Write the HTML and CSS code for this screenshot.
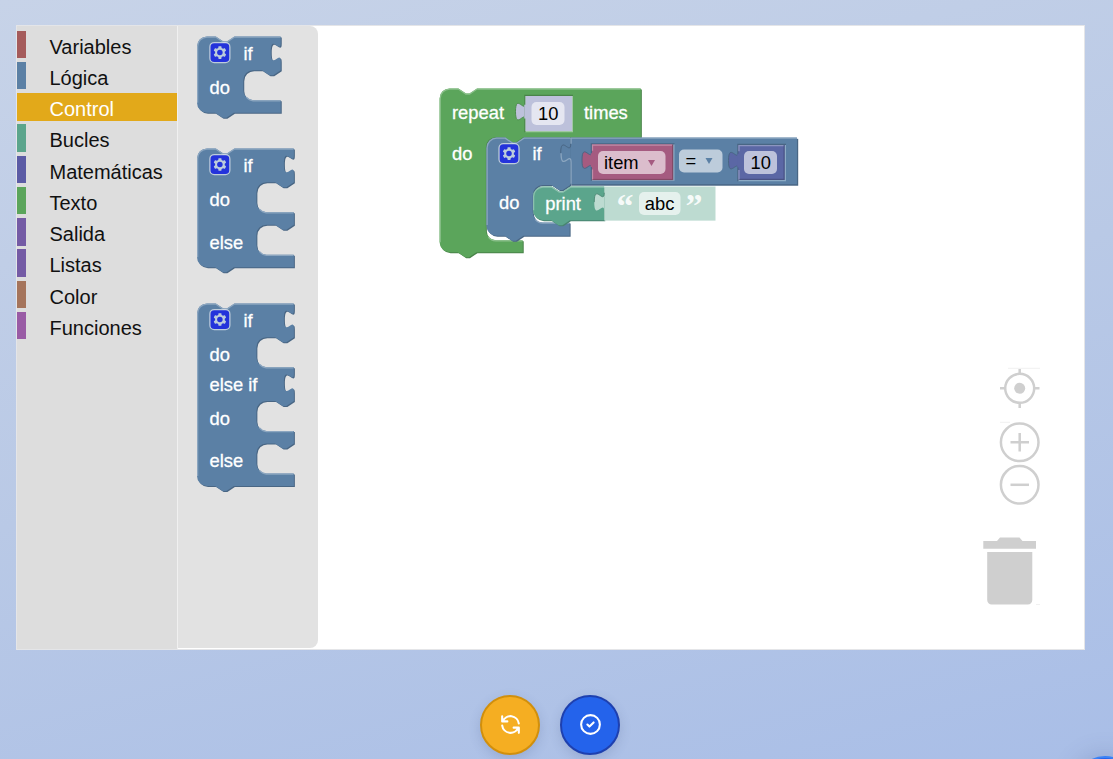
FILE: index.html
```html
<!DOCTYPE html>
<html lang="es">
<head>
<meta charset="utf-8">
<title>Editor de bloques</title>
<link rel="stylesheet" href="styles.css">
</head>
<body>
<main class="page">
  <section class="editor">
    <ul class="toolbox">
      <li class="category variables">Variables</li>
      <li class="category logic">Lógica</li>
      <li class="category control selected">Control</li>
      <li class="category loops">Bucles</li>
      <li class="category math">Matemáticas</li>
      <li class="category text">Texto</li>
      <li class="category output">Salida</li>
      <li class="category lists">Listas</li>
      <li class="category color">Color</li>
      <li class="category functions">Funciones</li>
    </ul>
    <div class="flyout">
      <svg class="canvas" viewBox="178 26 140 623" width="140" height="623">
        <defs>
          <g id="gear" opacity=".6">
            <rect width="16" height="16" rx="3.500" fill="#00f" stroke="#fff"/>
            <path fill="#fff" d="m4.203,7.296 0,1.368 -0.92,0.677 -0.11,0.41 0.9,1.559 0.41,0.11 1.043,-0.457 1.187,0.683 0.127,1.134 0.3,0.3 1.8,0 0.3,-0.299 0.127,-1.138 1.185,-0.682 1.046,0.458 0.409,-0.11 0.9,-1.559 -0.11,-0.41 -0.92,-0.677 0,-1.366 0.92,-0.677 0.11,-0.41 -0.9,-1.559 -0.409,-0.109 -1.046,0.458 -1.185,-0.682 -0.127,-1.138 -0.3,-0.299 -1.8,0 -0.3,0.3 -0.126,1.135 -1.187,0.682 -1.043,-0.457 -0.41,0.11 -0.899,1.559 0.108,0.409z"/>
            <circle cx="8" cy="8" r="2.2" fill="#00f"/>
          </g>
          <path id="if1" d="M0,8 A8,8 0 0,1 8,0 H15 l6,4 3,0 6,-4 H67 v5 c0,10 -8,-8 -8,7.5 s8,-2.5 8,7.5 V27 l-6,4 -3,0 -6,-4 h-7 a8,8 0 0,0 -8,8 v8 a8,8 0 0,0 8,8 H67 V61 H29.5 l-6,4 -3,0 -6,-4 H8 a8,8 0 0,1 -8,-8 z"/>
          <path id="if2" d="M0,8 A8,8 0 0,1 8,0 H15 l6,4 3,0 6,-4 H77.500 v5 c0,10 -8,-8 -8,7.500 s8,-2.500 8,7.500 V27 l-6,4 -3,0 -6,-4 h-7 a8,8 0 0,0 -8,8 v8 a8,8 0 0,0 8,8 H77.500 V61 l-6,4 -3,0 -6,-4 h-7 a8,8 0 0,0 -8,8 v8 a8,8 0 0,0 8,8 H77.500 V95 H29.500 l-6,4 -3,0 -6,-4 H8 a8,8 0 0,1 -8,-8 z"/>
          <path id="if3" d="M0,8 A8,8 0 0,1 8,0 H15 l6,4 3,0 6,-4 H77.500 v5 c0,10 -8,-8 -8,7.500 s8,-2.500 8,7.500 V27 l-6,4 -3,0 -6,-4 h-7 a8,8 0 0,0 -8,8 v8 a8,8 0 0,0 8,8 H77.500 v5 c0,10 -8,-8 -8,7.500 s8,-2.500 8,7.500 V78 l-6,4 -3,0 -6,-4 h-7 a8,8 0 0,0 -8,8 v8 a8,8 0 0,0 8,8 H77.500 V112 l-6,4 -3,0 -6,-4 h-7 a8,8 0 0,0 -8,8 v8 a8,8 0 0,0 8,8 H77.500 V146 H29.500 l-6,4 -3,0 -6,-4 H8 a8,8 0 0,1 -8,-8 z"/>
        </defs>
        <g class="block" transform="translate(197 36.400) scale(1.25)">
          <use href="#if1" x=".8" y=".8" fill="#496684"/>
          <use href="#if1" fill="#5b80a5"/>
          <path class="light blue-light" d="M.5,53 V8 A7.500,7.500 0 0,1 8,.5 H15 l6,4 3,0 6,-4 H66.500 M39.500,48.500 a8,8 0 0,0 5.500,3 H66.500"/>
          <use href="#gear" x="10.300" y="4.900"/>
        </g>
        <g class="block" transform="translate(197 148.400) scale(1.25)">
          <use href="#if2" x=".8" y=".8" fill="#496684"/>
          <use href="#if2" fill="#5b80a5"/>
          <path class="light blue-light" d="M.5,87 V8 A7.500,7.500 0 0,1 8,.5 H15 l6,4 3,0 6,-4 H77 M50,48.500 a8,8 0 0,0 5.500,3 H77 M50,82.500 a8,8 0 0,0 5.500,3 H77"/>
          <use href="#gear" x="10.300" y="4.900"/>
        </g>
        <g class="block" transform="translate(197 303.400) scale(1.25)">
          <use href="#if3" x=".8" y=".8" fill="#496684"/>
          <use href="#if3" fill="#5b80a5"/>
          <path class="light blue-light" d="M.5,138 V8 A7.500,7.500 0 0,1 8,.5 H15 l6,4 3,0 6,-4 H77 M50,48.500 a8,8 0 0,0 5.500,3 H77 M50,99.500 a8,8 0 0,0 5.500,3 H77 M50,133.500 a8,8 0 0,0 5.500,3 H77"/>
          <use href="#gear" x="10.300" y="4.900"/>
        </g>
        <g class="label">
          <text x="243.500" y="60">if</text>
          <text x="209.500" y="94">do</text>
          <text x="243.500" y="172">if</text>
          <text x="209.500" y="206">do</text>
          <text x="209.500" y="249">else</text>
          <text x="243.500" y="327">if</text>
          <text x="209.500" y="361">do</text>
          <text x="209.500" y="391">else if</text>
          <text x="209.500" y="425">do</text>
          <text x="209.500" y="467">else</text>
        </g>
      </svg>
    </div>
    <div class="workspace">
      <svg class="canvas" viewBox="318 26 766 623" width="766" height="623">
        <defs>
          <path id="repeat" d="M0,8 A8,8 0 0,1 8,0 H15 l6,4 3,0 6,-4 H161 V39 H67 l-6,4 -3,0 -6,-4 h-7 a8,8 0 0,0 -8,8 V113.500 a8,8 0 0,0 8,8 H66.500 V131 H29.500 l-6,4 -3,0 -6,-4 H8 a8,8 0 0,1 -8,-8 z"/>
          <path id="cond" d="M0,8 A8,8 0 0,1 8,0 H15 l6,4 3,0 6,-4 H67 V38 l-6,4 -3,0 -6,-4 h-7 a8,8 0 0,0 -8,8 V60 a8,8 0 0,0 8,8 H66.500 V78.500 H29.500 l-6,4 -3,0 -6,-4 H8 a8,8 0 0,1 -8,-8 z"/>
          <path id="print" d="M0,8 A8,8 0 0,1 8,0 H15 l6,4 3,0 6,-4 H57 V27 H29.500 l-6,4 -3,0 -6,-4 H8 a8,8 0 0,1 -8,-8 z"/>
          <path id="tab" d="M0,20 c0,-10 -8,8 -8,-7.500 s8,2.500 8,-7.500 z"/>
        </defs>
        <!-- repeat -->
        <g transform="translate(439.600 88.400) scale(1.25)">
          <use href="#repeat" x=".8" y=".8" fill="#498449"/>
          <use href="#repeat" fill="#5ba55b"/>
          <path class="light green-light" d="M.5,123 V8 A7.500,7.500 0 0,1 8,.5 H15 l6,4 3,0 6,-4 H160.500 M39,119 a8,8 0 0,0 6,3 H66"/>
        </g>
        <!-- shadow number -->
        <g transform="translate(525.500 96) scale(1.25)">
          <use href="#tab" fill="#bdc1db" stroke="#4c8c4c" stroke-width=".8"/>
          <rect x="-.5" y="-.5" width="38.500" height="29.500" fill="#9ec99e"/>
          <path d="M-.5,29 V-.5 H38" fill="none" stroke="#498449"/>
          <rect width="37.300" height="28" fill="#bdc1db"/>
          <rect x="-1" y="7" width="3" height="11" fill="#bdc1db"/>
        </g>
        <!-- if -->
        <g transform="translate(486.500 137.600) scale(1.25)">
          <use href="#cond" x=".8" y=".8" fill="#496684"/>
          <use href="#cond" fill="#5b80a5"/>
          <path class="light blue-light" d="M.5,70 V8 A7.500,7.500 0 0,1 8,.5 H15 l6,4 3,0 6,-4 H67 M39,65.500 a8,8 0 0,0 6,3 H66"/>
          <use href="#gear" x="10" y="4.800"/>
        </g>
        <!-- comparison -->
        <g transform="translate(570.700 137.600) scale(1.25)">
          <rect x=".5" y="1" width="181.500" height="37.500" fill="#496684"/>
          <rect width="181" height="37.300" fill="#5b80a5"/>
          <use href="#tab" fill="#5b80a5"/>
          <path d="M0,5 c0,10 -8,-8 -8,7.500" fill="none" stroke="#496684" stroke-width=".8"/>
          <path class="light blue-light" d="M.3,37 V20 c0,-10 -8,8 -8,-7.500 M.3,5 V.5 H181"/>
        </g>
        <!-- item -->
        <g transform="translate(592 144.500) scale(1.25)">
          <path d="M-.5,29 V-.5 H66 V29 z" fill="#8cabc5"/>
          <path d="M-.5,29 V-.5 H66" fill="none" stroke="#496684"/>
          <use href="#tab" fill="#a55b80" stroke="#496684" stroke-width=".8"/>
          <rect width="65" height="28.500" fill="#844966"/>
          <rect width="64" height="27.500" fill="#a55b80"/>
          <rect x="-1" y="7" width="3" height="11" fill="#a55b80"/>
          <path class="light pink-light" d="M.4,28 V20 M.4,5 V.4 H64"/>
        </g>
        <!-- number -->
        <g transform="translate(738.500 145) scale(1.25)">
          <path d="M-.5,29 V-.5 H38 V29 z" fill="#8cabc5"/>
          <path d="M-.5,29 V-.5 H38" fill="none" stroke="#496684"/>
          <use href="#tab" fill="#5b67a5" stroke="#496684" stroke-width=".8"/>
          <rect width="37" height="28" fill="#495284"/>
          <rect width="36" height="27" fill="#5b67a5"/>
          <rect x="-1" y="7" width="3" height="11" fill="#5b67a5"/>
          <path class="light violet-light" d="M.4,27.500 V20 M.4,5 V.4 H36"/>
        </g>
        <!-- print and its text -->
        <g transform="translate(533 186.500) scale(1.25)">
          <use href="#print" x=".8" y=".8" fill="#498470"/>
          <use href="#print" fill="#5ba58c"/>
          <path class="light mint-light" d="M.5,19 V8 A7.500,7.500 0 0,1 8,.5 H15 l6,4 3,0 6,-4 H57"/>
          <rect x="57" width="89" height="27.300" fill="#bddbd1"/>
          <use href="#tab" x="57" fill="#bddbd1"/>
          <path d="M57,5 c0,10 -8,-8 -8,7.500" fill="none" stroke="#498470" stroke-width=".7"/>
        </g>
        <!-- fields -->
        <g class="fields">
          <rect x="531.500" y="102" width="33" height="23" rx="5"/>
          <rect x="598" y="151" width="67.500" height="23" rx="5"/>
          <rect x="679" y="149.500" width="43.500" height="23" rx="5"/>
          <rect x="744" y="151" width="33" height="23" rx="5"/>
          <rect x="639" y="192" width="41.500" height="23" rx="5"/>
        </g>
        <g class="label">
          <text x="452" y="119">repeat</text>
          <text x="584" y="119">times</text>
          <text x="452" y="160">do</text>
          <text x="532.500" y="160">if</text>
          <text x="499" y="209">do</text>
          <text x="545.300" y="210">print</text>
        </g>
        <g class="value">
          <text x="538" y="120">10</text>
          <text x="604" y="169">item</text>
          <text x="685.500" y="167">=</text>
          <text x="750.500" y="169">10</text>
          <text x="644.800" y="210">abc</text>
        </g>
        <g class="quotes">
          <text x="616.500" y="217">“</text>
          <text x="685.500" y="217">”</text>
        </g>
        <path d="M648,160 h7 l-3.500,6 z" fill="#a55b80"/>
        <path d="M705.500,158 h7 l-3.500,6 z" fill="#5b80a5"/>
        <!-- workspace controls -->
        <g fill="none" stroke="#cfcfcf" stroke-width="2.500">
          <path d="M1008,368.300 h32 M1000,422.300 h10 M1036,604.500 h4" stroke="#f1f1f1" stroke-width="1"/>
          <circle cx="1019.700" cy="388.300" r="14.500"/>
          <path d="M1019.700,369 v5 M1019.700,403 v5 M1000,388.300 h5 M1034.500,388.300 h5"/>
          <circle cx="1019.700" cy="388.300" r="5.500" fill="#cfcfcf" stroke="none"/>
          <circle cx="1019.700" cy="442.300" r="18.800"/>
          <path d="M1010.500,442.300 h18.500 M1019.700,433 v18.500"/>
          <circle cx="1019.700" cy="484.800" r="18.800"/>
          <path d="M1010.500,484.800 h18.500"/>
        </g>
        <path fill="#cfcfcf" d="M983.300,541 H997 l3,-3.500 H1019.500 l3,3.500 H1036 V548.700 H983.300 z M987.200,552 H1032.300 V600 a4.500,4.500 0 0 1 -4.500,4.500 H991.700 a4.500,4.500 0 0 1 -4.500,-4.500 z"/>
      </svg>
    </div>
  </section>
  <div class="actions">
    <button class="round reset" aria-label="Reiniciar">
      <svg class="icon" viewBox="0 0 24 24"><path d="M4 4v5h.582m15.356 2A8.001 8.001 0 004.582 9m0 0H9m11 11v-5h-.581m0 0a8.003 8.003 0 01-15.357-2m15.357 2H15"/></svg>
    </button>
    <button class="round confirm" aria-label="Comprobar">
      <svg class="icon" viewBox="0 0 24 24"><path d="M9 12l2 2 4-4m6 2a9 9 0 11-18 0 9 9 0 0118 0z"/></svg>
    </button>
  </div>
  <div class="floating"></div>
</main>
</body>
</html>
```
FILE: styles.css
```css
* { box-sizing: border-box; }
body { margin: 0; font-family: "Liberation Sans", Arial, sans-serif; }
.page {
  position: relative;
  height: 759px;
  overflow: hidden;
  padding: 25px 28px 0 16px;
  background: linear-gradient(165deg, #c7d3e8 0%, #b9c9e6 50%, #a9bee7 100%);
}
.editor {
  display: flex;
  height: 625px;
  border: 1px solid #e4e5e8;
  background: #fff;
}
.toolbox {
  width: 161px;
  margin: 0;
  padding: 4.5px 0 0;
  list-style: none;
  background: #ddd;
  border-right: 1px solid #f0f0f0;
}
.category {
  height: 27.5px;
  margin-bottom: 3.75px;
  padding-left: 23.5px;
  border-left: 9px solid;
  font-size: 20px;
  line-height: 33px;
  color: #111;
  white-space: nowrap;
}
.variables { border-left-color: #a55b5b; }
.logic { border-left-color: #5b80a5; }
.control { border-left-color: #e2a91a; }
.loops { border-left-color: #5ba58c; }
.math { border-left-color: #5b5ba5; }
.text { border-left-color: #5ba55b; }
.output, .lists { border-left-color: #745ba5; }
.color { border-left-color: #a5745b; }
.functions { border-left-color: #995ba5; }
.selected { background: #e2a91a; color: #fff; }
.flyout {
  width: 140px;
  height: 622px;
  overflow: hidden;
  background: #e2e2e2;
  border-radius: 0 8px 8px 0;
}
.workspace { flex: 1; overflow: hidden; }
.canvas { display: block; }
.light { fill: none; stroke-width: 1; }
.blue-light { stroke: #8ca6c0; }
.green-light { stroke: #8cc08c; }
.pink-light { stroke: #c08ca6; }
.violet-light { stroke: #8c95c0; }
.mint-light { stroke: #8cc0ae; }
.label { fill: #fff; font-size: 18.33px; stroke: #fff; stroke-width: .3px; }
.value { fill: #000; font-size: 18.33px; }
.fields { fill: #fff; fill-opacity: .6; }
.quotes { fill: #fff; fill-opacity: .9; font: bold 34px "Liberation Serif", serif; }
.actions {
  display: flex;
  gap: 20px;
  margin: 45px 0 0 464px;
}
.round {
  display: flex;
  align-items: center;
  justify-content: center;
  width: 60px;
  height: 60px;
  padding: 0 0 1px;
  border: 2px solid;
  border-radius: 50%;
  box-shadow: 0 4px 12px rgba(60, 80, 130, .2);
}
.reset { background: #f5ae22; border-color: #d18f0c; }
.confirm { background: #2463eb; border-color: #1e40af; }
.icon {
  width: 25px;
  height: 25px;
  fill: none;
  stroke: #fff;
  stroke-width: 2;
  stroke-linecap: round;
  stroke-linejoin: round;
}
.floating {
  position: absolute;
  left: 1075px;
  top: 756px;
  width: 60px;
  height: 60px;
  border-radius: 50%;
  border: 2px solid #3b82f6;
  background: #2563eb;
  box-shadow: 0 0 24px rgba(60, 80, 130, .25);
}
```
